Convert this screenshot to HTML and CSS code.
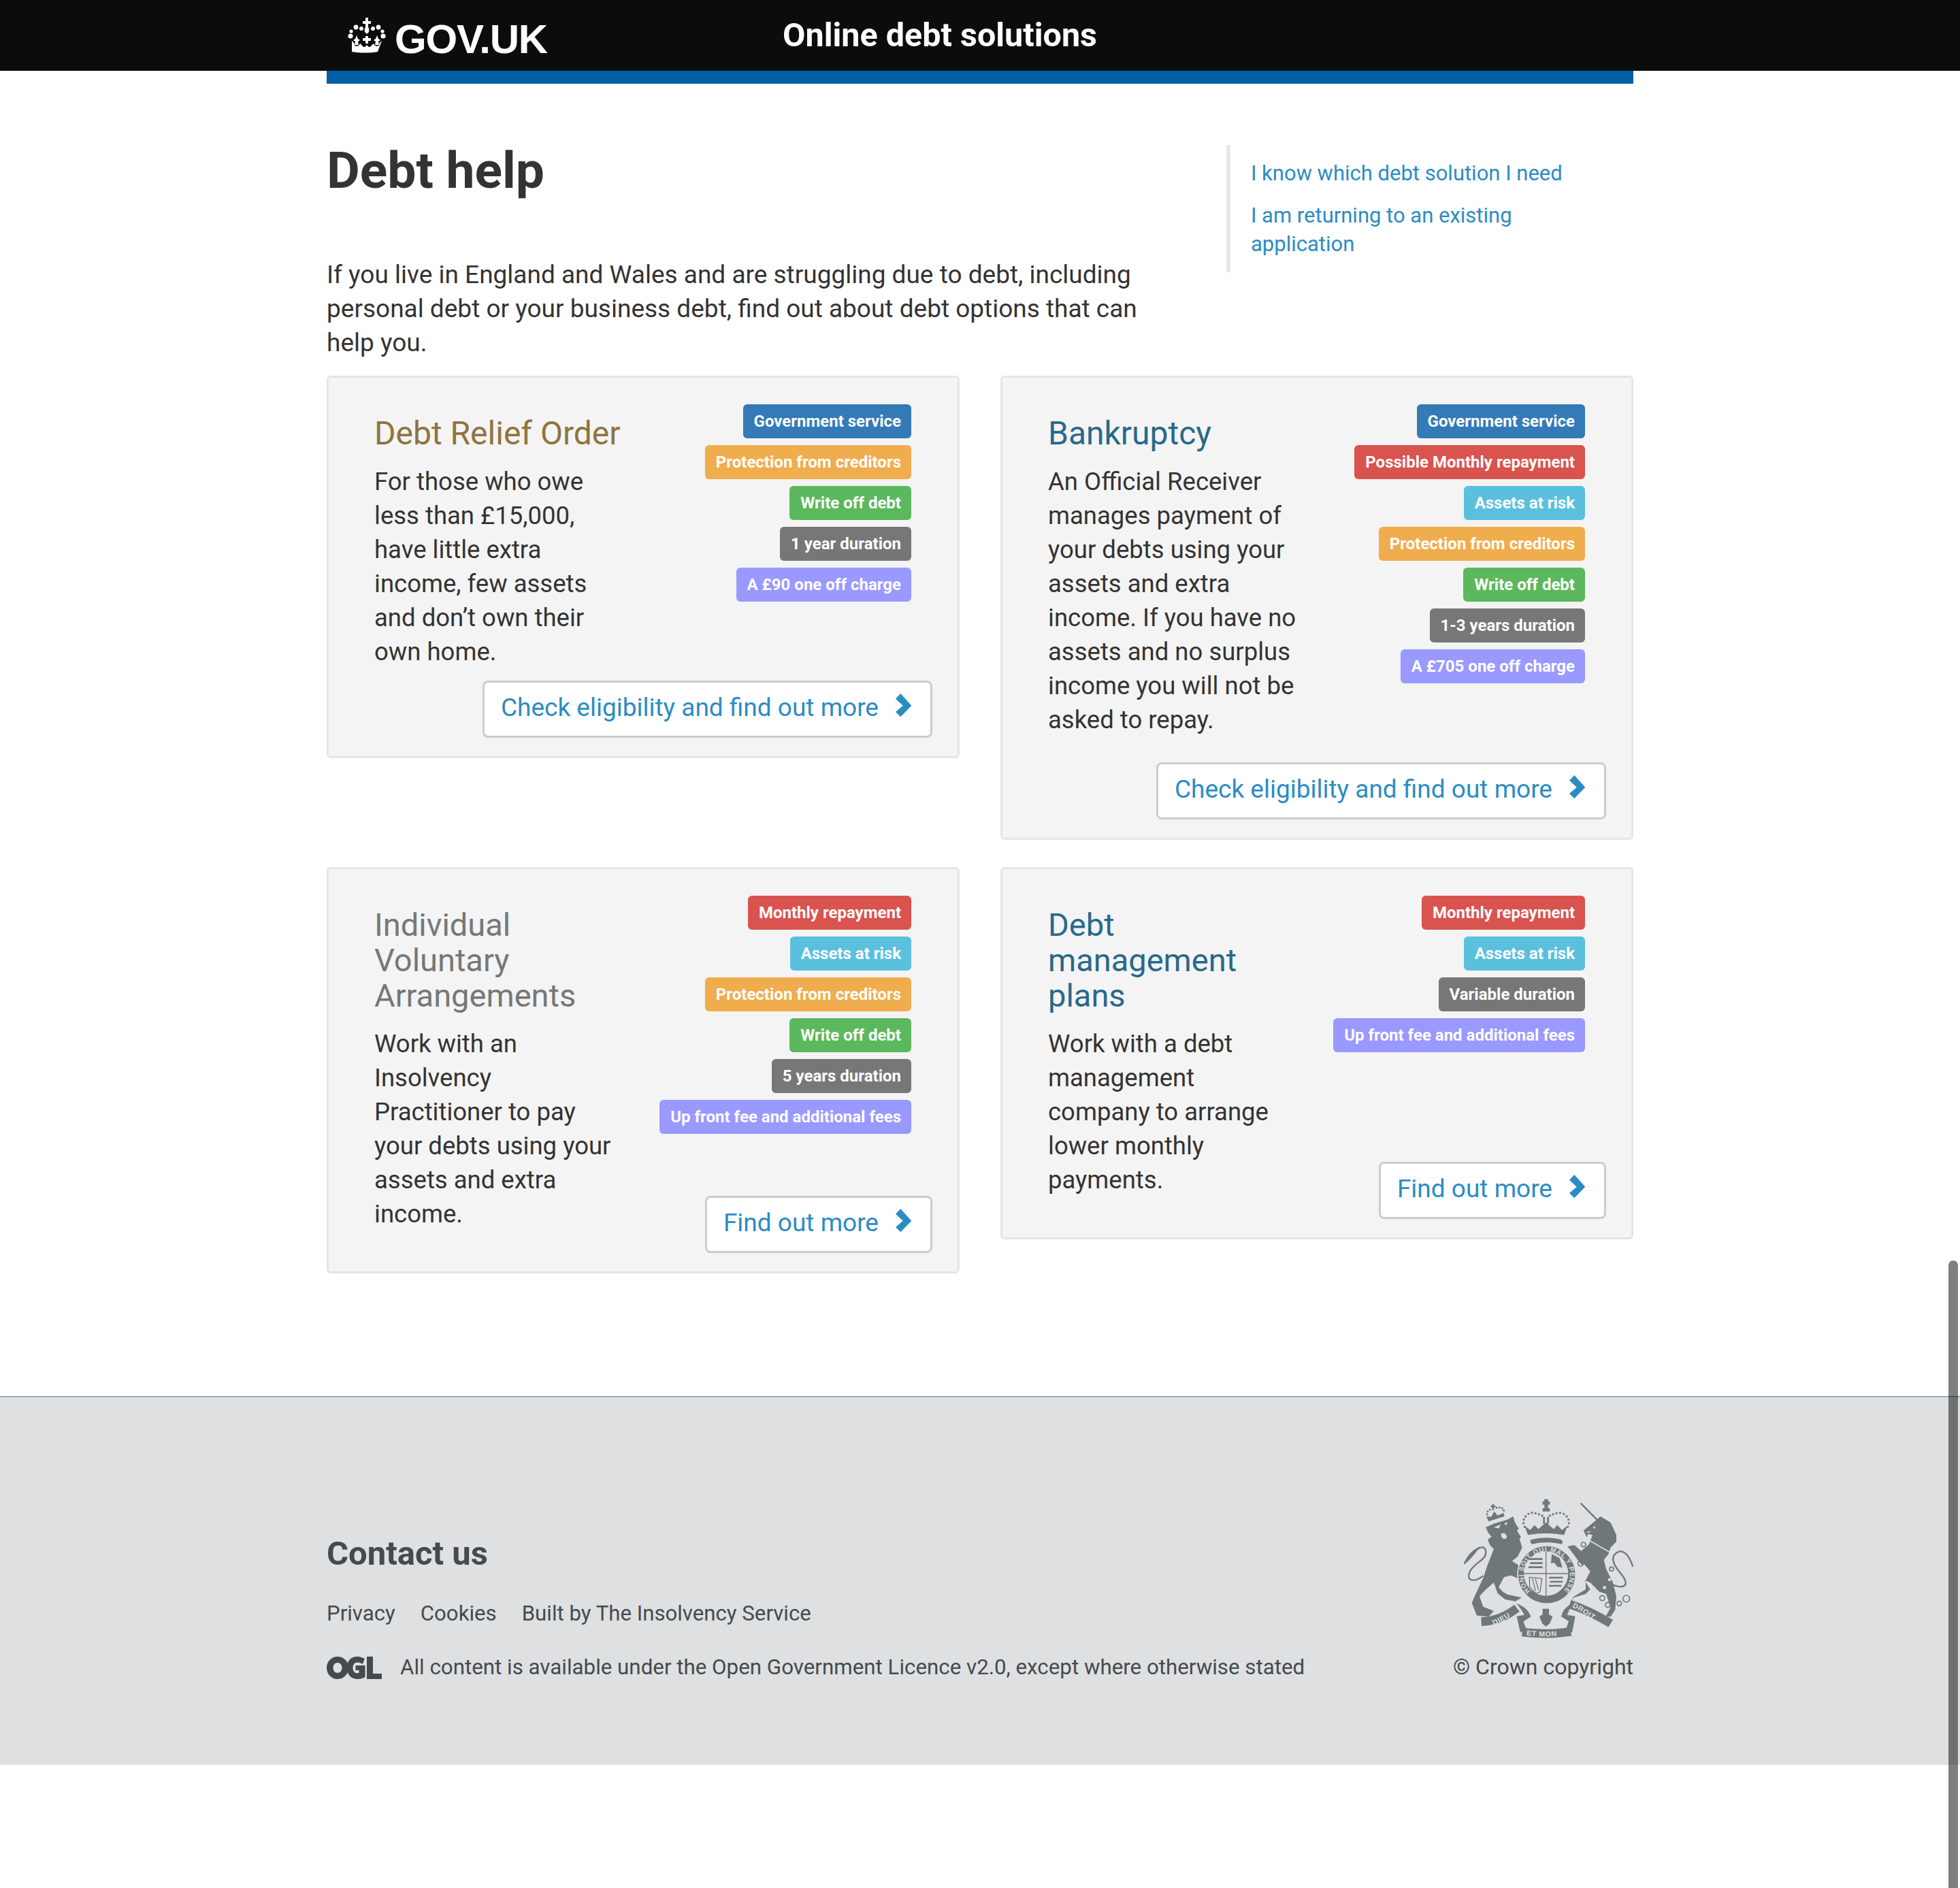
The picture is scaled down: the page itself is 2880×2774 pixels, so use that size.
FILE: index.html
```html
<!DOCTYPE html>
<html lang="en">

<head>
    <meta charset="UTF-8">
    <title>Debt help</title>
    <link rel="stylesheet" href="styles.css">
</head>

<body>
<header class="topbar">
    <div class="topbar-inner">
        <a class="logo" href="#">
            <svg class="crown" viewBox="0 0 56 52" aria-hidden="true">
                <path d="M26 0h4v5h4v4h-4v5h-4V9h-4V5h4z"/>
                <path d="M28 12c3 2 4 5 3 9l-3 3-3-3c-1-4 0-7 3-9z"/>
                <circle cx="12" cy="14" r="3.400"/><circle cx="20" cy="16" r="3"/><circle cx="37" cy="16" r="3"/><circle cx="45" cy="14" r="3.400"/>
                <circle cx="4" cy="27" r="3.600"/><circle cx="52" cy="27" r="3.600"/><circle cx="5" cy="20" r="2.600"/><circle cx="51" cy="20" r="2.600"/>
                <path d="M26 27h4v3h4v4h-4v4h-4v-4h-4v-4h4z"/>
                <path d="M13 26l2 5 3 2-3 2 1 5h-6l1-5-3-2 3-2zM43 26l2 5 3 2-3 2 1 5h-6l1-5-3-2 3-2z"/>
                <path d="M6 34c3 2 4 4 4 7 4 2 7 0 8-3 3 2 4 5 6 5 2 0 3-2 4-3 1 1 2 3 4 3s3-3 6-5c1 3 4 5 8 3 0-3 1-5 4-7l-6 16c-12 2-26 2-38 0z"/>
            </svg>
            <span>GOV.UK</span>
        </a>
        <a class="service-name" href="#">Online debt solutions</a>
    </div>
</header>

<main class="page">
    <div class="blue-rule"></div>

    <div class="intro">
        <div class="intro-main">
            <h1>Debt help</h1>
            <p>If you live in England and Wales and are struggling due to debt, including personal debt or your business debt, find out about debt options that can help you.</p>
        </div>
        <nav class="quick-links">
            <a href="#">I know which debt solution I need</a>
            <a href="#">I am returning to an existing application</a>
        </nav>
    </div>

    <div class="cards">
        <section class="card">
            <div class="card-body">
                <div class="card-text">
                    <h2 class="title-brown">Debt Relief Order</h2>
                    <p>For those who owe less than £15,000, have little extra income, few assets and don’t own their own home.</p>
                </div>
                <div class="card-side">
                    <div class="tags">
                        <span class="tag tag-blue">Government service</span>
                        <span class="tag tag-orange">Protection from creditors</span>
                        <span class="tag tag-green">Write off debt</span>
                        <span class="tag tag-grey">1 year duration</span>
                        <span class="tag tag-purple">A £90 one off charge</span>
                    </div>
                </div>
            </div>
            <a class="more" href="#">Check eligibility and find out more<svg viewBox="0 0 24 35"><path d="M7.300 0L0 7.700 10.700 17.700 0 27l7.300 7.300 16-16.600z"/></svg></a>
        </section>

        <section class="card">
            <div class="card-body loose">
                <div class="card-text">
                    <h2 class="title-teal">Bankruptcy</h2>
                    <p>An Official Receiver manages payment of your debts using your assets and extra income. If you have no assets and no surplus income you will not be asked to repay.</p>
                </div>
                <div class="card-side">
                    <div class="tags">
                        <span class="tag tag-blue">Government service</span>
                        <span class="tag tag-red">Possible Monthly repayment</span>
                        <span class="tag tag-cyan">Assets at risk</span>
                        <span class="tag tag-orange">Protection from creditors</span>
                        <span class="tag tag-green">Write off debt</span>
                        <span class="tag tag-grey">1-3 years duration</span>
                        <span class="tag tag-purple">A £705 one off charge</span>
                    </div>
                </div>
            </div>
            <a class="more" href="#">Check eligibility and find out more<svg viewBox="0 0 24 35"><path d="M7.300 0L0 7.700 10.700 17.700 0 27l7.300 7.300 16-16.600z"/></svg></a>
        </section>

        <section class="card">
            <div class="card-body">
                <div class="card-text with-side-btn">
                    <h2 class="title-grey">Individual Voluntary Arrangements</h2>
                    <p>Work with an Insolvency<br>Practitioner to pay your debts using your assets and extra income.</p>
                </div>
                <div class="card-side">
                    <div class="tags">
                        <span class="tag tag-red">Monthly repayment</span>
                        <span class="tag tag-cyan">Assets at risk</span>
                        <span class="tag tag-orange">Protection from creditors</span>
                        <span class="tag tag-green">Write off debt</span>
                        <span class="tag tag-grey">5 years duration</span>
                        <span class="tag tag-purple">Up front fee and additional fees</span>
                    </div>
                    <a class="more" href="#">Find out more<svg viewBox="0 0 24 35"><path d="M7.300 0L0 7.700 10.700 17.700 0 27l7.300 7.300 16-16.600z"/></svg></a>
                </div>
            </div>
        </section>

        <section class="card">
            <div class="card-body">
                <div class="card-text with-side-btn">
                    <h2 class="title-teal">Debt management plans</h2>
                    <p>Work with a debt management company to arrange lower monthly payments.</p>
                </div>
                <div class="card-side">
                    <div class="tags">
                        <span class="tag tag-red">Monthly repayment</span>
                        <span class="tag tag-cyan">Assets at risk</span>
                        <span class="tag tag-grey">Variable duration</span>
                        <span class="tag tag-purple">Up front fee and additional fees</span>
                    </div>
                    <a class="more" href="#">Find out more<svg viewBox="0 0 24 35"><path d="M7.300 0L0 7.700 10.700 17.700 0 27l7.300 7.300 16-16.600z"/></svg></a>
                </div>
            </div>
        </section>
    </div>
</main>

<footer class="footer">
    <div class="footer-inner">
        <div class="footer-main">
            <h3>Contact us</h3>
            <ul class="footer-links">
                <li><a href="#">Privacy</a></li>
                <li><a href="#">Cookies</a></li>
                <li><a href="#">Built by The Insolvency Service</a></li>
            </ul>
            <div class="licence">
                <svg class="ogl" viewBox="0 0 81 33" aria-hidden="true">
                    <path fill-rule="evenodd" d="M16 0c9 0 16 7 16 16.500S25 33 16 33 0 26 0 16.500 7 0 16 0zm0 9c-4 0-6.500 3.400-6.500 7.500S12 24 16 24s6.500-3.400 6.500-7.500S20 9 16 9z"/>
                    <path d="M45 0c4 0 8 1.200 11 3.500l-3.500 7.500c-2-1.500-4.500-2.400-7-2.400-4.500 0-7 3.400-7 7.900s2.500 7.900 6.500 7.900c1 0 1.800-.1 2.500-.4V20h-5v-7h14v17c-3 2-7 3-11 3-9.500 0-16-6.500-16-16.500S35.500 0 45 0z"/>
                    <path d="M59 0h9v25h13v8H59z"/>
                </svg>
                <span>All content is available under the Open Government Licence v2.0, except where otherwise stated</span>
            </div>
        </div>
        <div class="crest-block">
            <svg class="crest" viewBox="210 130 750 615" aria-label="Royal coat of arms">
                <defs>
                    <path id="garter-ring" d="M505 538A103 103 0 1 1 651 538"/>
                    <path id="rib-left" d="M345 688Q400 665 447 630"/>
                    <path id="rib-right" d="M690 608Q750 636 808 684"/>
                    <path id="rib-mid" d="M488 732Q575 744 663 730"/>
                </defs>
                <!-- lion -->
                <path d="M310 256L345 240 405 222 430 208 438 235 455 262 447 270 465 300 458 306 470 345 450 385 425 405 450 420 468 450 478 490 450 480 420 468 390 476 366 520 385 540 405 552 468 566 440 582 395 574 362 548 345 500 310 530 282 560 298 606 345 625 322 650 270 645 248 590 265 550 298 480 318 420 345 352 328 335 318 310 335 298 320 280z"/>
                <path class="crest-line" d="M298 470C260 500 220 495 240 450C265 405 320 400 308 355C295 325 255 360 215 415"/>
                <path d="M212 422C222 385 250 355 285 340C265 370 245 395 212 422z"/>
                <path d="M322 230L312 208 333 210 347 186 362 204 388 192 392 208z"/>
                <path d="M338 154h8v6h6v8h-6v12h-8v-12h-6v-8h6z"/>
                <g>
                    <circle cx="315" cy="198" r="4.500"/><circle cx="318" cy="186" r="4.500"/><circle cx="328" cy="178" r="4.500"/><circle cx="358" cy="170" r="4.500"/><circle cx="370" cy="168" r="4.500"/><circle cx="382" cy="172" r="4.500"/><circle cx="389" cy="182" r="4.500"/>
                </g>
                <path class="crest-cut" d="M345 256l30-12-8 17zM390 240l15-8-4 16zM378 282l15 0 10 14-4 10-12 2-10-12z"/>
                <!-- crown -->
                <path d="M566 132h18v10h8v14h-8v16h8v14h-32v-14h8v-16h-8v-14h8z"/>
                <path d="M562 210h8v30h-8zM580 210h8v30h-8z"/>
                <path d="M495 290l-14-40 24 18 20-22 16 18 34-30 34 30 16-18 20 22 24-18-14 40q-80-14-160 0z"/>
                <path d="M510 310q65-16 130 0 14 8 4 20-70-14-130 0-14-8-4-20z"/>
                <g>
                    <circle cx="476" cy="238" r="5"/><circle cx="477" cy="222" r="5"/><circle cx="485" cy="208" r="5"/><circle cx="498" cy="197" r="5"/><circle cx="513" cy="192" r="5"/><circle cx="529" cy="194" r="5"/><circle cx="544" cy="199" r="5"/><circle cx="558" cy="205" r="5"/>
                    <circle cx="676" cy="238" r="5"/><circle cx="674" cy="222" r="5"/><circle cx="666" cy="208" r="5"/><circle cx="653" cy="197" r="5"/><circle cx="637" cy="192" r="5"/><circle cx="621" cy="194" r="5"/><circle cx="606" cy="199" r="5"/><circle cx="592" cy="205" r="5"/>
                    <circle cx="481" cy="254" r="5"/><circle cx="671" cy="254" r="5"/>
                </g>
                <!-- garter and shield -->
                <circle class="crest-garter" cx="578" cy="465" r="128"/>
                <circle class="crest-cut" cx="575" cy="460" r="98"/>
                <path class="crest-thin" d="M575 362v196M477 460h196"/>
                <path d="M500 392h60v8h-60zM505 410h55v8h-55zM498 428h62v8h-62zM588 474h62v8h-62zM593 492h55v8h-55zM588 510h55v8h-55zM600 374l35 18 12 42-22-4-14-18-14 4z"/>
                <path class="crest-thin" d="M502 476l55 6-8 58-18 8-28-30z"/>
                <path class="crest-thin" d="M515 482l14 54M528 482l14 50"/>
                <text class="crest-text garter-text"><textPath href="#garter-ring" textLength="480">HONI SOIT QUI MAL Y PENSE</textPath></text>
                <!-- unicorn -->
                <path class="crest-line" d="M728 150L805 228"/>
                <path d="M740 270L790 230 815 208 860 235 885 290 885 320 860 345 850 375 830 400 840 440 870 500 885 560 880 620 860 650 838 650 860 610 840 550 810 540 770 500 745 490 770 530 750 550 700 565 680 585 700 560 750 530 750 490 770 450 745 420 730 420 700 380 670 340 700 335 730 360 765 330 780 290 760 285 755 300z"/>
                <path class="crest-cut" d="M780 258l14-8-4 12zM750 278l24-6-10 8z"/>
                <path class="crest-collar" d="M768 315l95 55"/>
                <path class="crest-line" d="M870 510C925 530 945 510 905 460C860 410 860 375 900 362C925 360 945 390 958 430"/>
                <g class="crest-ring">
                    <circle cx="740" cy="332" r="10"/><circle cx="728" cy="415" r="12"/><circle cx="864" cy="440" r="9"/><circle cx="823" cy="568" r="11"/><circle cx="848" cy="598" r="11"/><circle cx="898" cy="592" r="10"/><circle cx="929" cy="571" r="15"/>
                </g>
                <circle class="crest-cut" cx="855" cy="487" r="7"/><circle class="crest-cut" cx="833" cy="522" r="7"/>
                <!-- ribbon and motto -->
                <path class="crest-band" d="M290 672Q375 668 447 612"/>
                <path class="crest-band" d="M680 595Q770 625 860 680"/>
                <path class="crest-band" d="M470 718Q575 732 685 716"/>
                <path d="M445 592Q495 610 508 650L475 672 488 704 462 720 446 648 480 642Q465 615 445 592zM690 592Q650 610 642 650L675 670 664 704 690 720 704 648 668 642Q680 615 690 592z"/>
                <text class="crest-text ribbon-text"><textPath href="#rib-left">DIEU</textPath></text>
                <text class="crest-text ribbon-text"><textPath href="#rib-right">DROIT</textPath></text>
                <text class="crest-text ribbon-text"><textPath href="#rib-mid">ET MON</textPath></text>
                <path d="M560 615h28v25l16 10-12 30-17 13-17-13-12-30 14-10z"/>
            </svg>
            <span class="copyright">© Crown copyright</span>
        </div>
    </div>
</footer>

<div class="scroll-thumb"></div>
</body>
</html>
```

FILE: styles.css
```css
* {
    box-sizing: border-box;
}

html, body {
    margin: 0;
    padding: 0;
}

body {
    min-height: 2774px;
    background-color: #fff;
    color: #333;
    font-family: Roboto, "Liberation Sans", sans-serif;
    font-size: 36.500px;
    line-height: 50px;
}

a {
    color: #2b8cc4;
    text-decoration: none;
}

/* top bar */
.topbar {
    height: 104px;
    background-color: #0b0c0c;
}

.topbar-inner {
    display: flex;
    width: 1920px;
    margin: 0 auto;
}

.logo {
    display: flex;
    width: 670px;
    padding: 26px 0 0 31px;
    color: #fff;
    font-family: "Liberation Sans", sans-serif;
    font-size: 60px;
    font-weight: 700;
    letter-spacing: -1.200px;
    line-height: 60px;
}

.logo span {
    padding-top: 2px;
}

.crown {
    width: 56px;
    height: 52px;
    margin-right: 13px;
    fill: #fff;
}

.service-name {
    padding-top: 27px;
    color: #fff;
    font-size: 48.500px;
    font-weight: 700;
    line-height: 50px;
}

/* page */
.page {
    width: 1920px;
    margin: 0 auto;
}

.blue-rule {
    height: 19px;
    background-color: #005ea5;
}

.intro {
    display: flex;
    justify-content: space-between;
    height: 429px;
}

.intro-main {
    width: 1200px;
}

h1 {
    margin: 0;
    padding-top: 97px;
    font-size: 75px;
    font-weight: 700;
    line-height: 60px;
}

.intro-main p {
    margin: 99px 0 0;
    font-size: 37px;
}

.quick-links {
    display: flex;
    flex-direction: column;
    gap: 20px;
    width: 598px;
    height: 187px;
    margin-top: 90px;
    padding: 21px 80px 0 30px;
    border-left: 6px solid #e8e8e8;
    font-size: 31px;
    line-height: 42px;
}

.cards {
    display: grid;
    grid-template-columns: 930px 930px;
    justify-content: space-between;
    align-items: start;
    row-gap: 40px;
}

.card {
    padding: 0 37px 27px 67px;
    border: 3px solid #e5e5e5;
    border-radius: 6px;
    background-color: #f4f4f4;
}

.card-body {
    display: flex;
    justify-content: space-between;
}

.card-text {
    width: 370px;
    padding-top: 56px;
}

.with-side-btn {
    padding-bottom: 32px;
}

.card-text h2 {
    margin: 0 0 20px;
    font-size: 48px;
    font-weight: 400;
    line-height: 52px;
    white-space: nowrap;
}

.with-side-btn h2 {
    font-size: 47px;
    white-space: normal;
}

.card-text p {
    margin: 0;
}

.title-brown {
    color: #8f7440;
}

.title-teal {
    color: #28698a;
}

.title-grey {
    color: #777;
}

.card-side {
    display: flex;
    flex-direction: column;
    align-items: flex-end;
}

.tags {
    display: flex;
    flex-direction: column;
    align-items: flex-end;
    gap: 10px;
    margin: 39px 31px 0 0;
}

.tag {
    height: 50px;
    padding: 0 15px 0 16px;
    border-radius: 6px;
    color: #fff;
    font-size: 24px;
    font-weight: 700;
    line-height: 51px;
    white-space: nowrap;
}

.tag-blue { background-color: #337ab7; }
.tag-orange { background-color: #f0ad4e; }
.tag-green { background-color: #5cb85c; }
.tag-grey { background-color: #777; }
.tag-purple { background-color: #9999ff; }
.tag-red { background-color: #d9534f; }
.tag-cyan { background-color: #5bc0de; }

.more {
    display: flex;
    align-items: center;
    width: max-content;
    height: 84px;
    margin-left: auto;
    padding: 0 27px 5px 24px;
    border: 3px solid #ccc;
    border-radius: 8px;
    background-color: #fff;
    font-size: 37px;
}

.card > .more {
    margin-top: 17px;
}

.loose {
    padding-bottom: 20px;
}

.card-side .more {
    margin-top: auto;
}

.more svg {
    width: 24px;
    height: 35px;
    margin: -6px 0 0 25px;
    fill: #2b8cc4;
}

/* footer */
.footer {
    height: 542px;
    margin-top: 180px;
    border-top: 2px solid #a1acb2;
    background-color: #dee0e2;
    color: #454a4c;
}

.footer-inner {
    display: flex;
    justify-content: space-between;
    width: 1920px;
    margin: 0 auto;
}

.footer-main {
    padding-top: 200px;
}

.footer-main h3 {
    margin: 0;
    font-size: 49px;
    font-weight: 700;
    line-height: 60px;
}

.footer-links {
    display: flex;
    gap: 37px;
    margin: 38px 0 0;
    padding: 0;
    list-style: none;
    font-size: 31.200px;
    line-height: 40px;
}

.footer-links a {
    color: #454a4c;
}

.licence {
    display: flex;
    align-items: center;
    gap: 27px;
    margin-top: 39px;
    font-size: 31.300px;
    line-height: 40px;
}

.ogl {
    width: 81px;
    height: 33px;
    fill: #454a4c;
}

.crest-block {
    display: flex;
    flex-direction: column;
    align-items: flex-end;
    padding-top: 149px;
    font-size: 32px;
    line-height: 40px;
}

.crest {
    width: 250px;
    height: 205px;
    margin-bottom: 22px;
    fill: #6f777b;
}

.crest-line {
    fill: none;
    stroke: #6f777b;
    stroke-width: 7;
}

.crest-thin {
    fill: none;
    stroke: #6f777b;
    stroke-width: 4;
}

.crest-garter {
    stroke: #dee0e2;
    stroke-width: 5;
}

.crest-band {
    fill: none;
    stroke: #6f777b;
    stroke-width: 38;
}

.crest-cut {
    fill: #dee0e2;
}

.crest-collar {
    fill: none;
    stroke: #dee0e2;
    stroke-width: 5;
}

.crest-ring {
    fill: none;
    stroke: #6f777b;
    stroke-width: 5;
}

.crest-text {
    fill: #dee0e2;
    font-family: "Liberation Sans", sans-serif;
    font-weight: 700;
}

.garter-text {
    font-size: 29px;
}

.ribbon-text {
    font-size: 32px;
    letter-spacing: 2px;
}

/* overlay scrollbar in the screenshot */
.scroll-thumb {
    position: fixed;
    top: 1852px;
    right: 3px;
    bottom: 0;
    width: 14px;
    border-radius: 7px 7px 0 0;
    background-color: rgba(0, 0, 0, 0.5);
}
```
